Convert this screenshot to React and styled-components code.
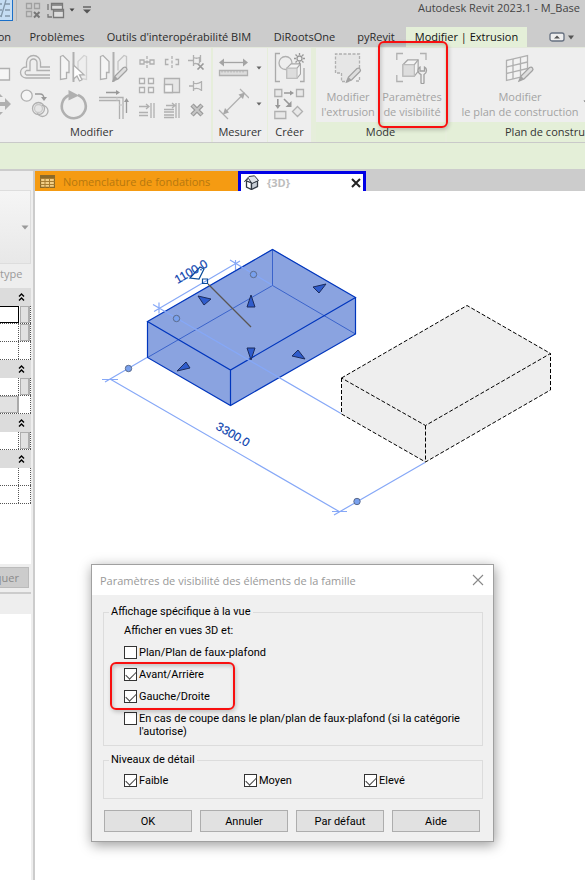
import React, {useState} from 'react';
import styled, {createGlobalStyle} from 'styled-components';

const GlobalStyle = createGlobalStyle`
  * {
    box-sizing: border-box;
  }
  body {
    margin: 0;
    overflow-x: hidden;
    background: #cccccc;
    font-family: "Open Sans", "Noto Sans", sans-serif;
    font-size: 11px;
    color: #333333;
  }
  button, input {
    margin: 0;
    padding: 0;
    font: inherit;
    color: inherit;
  }
  svg {
    flex: none;
  }
`;

const Window = styled.div`
  display: flex;
  flex-direction: column;
  min-height: 100vh;
  overflow: hidden;
`;

/* ---------- title bar ---------- */

const TitleBar = styled.header`
  display: flex;
  height: 27px;
  white-space: nowrap;
`;

const QuickAccess = styled.div`
  display: flex;
  flex: 0 0 418px;
`;

const QuickButton = styled.button`
  display: flex;
  align-items: center;
  justify-content: center;
  width: ${props => props.$width}px;
  height: 20px;
  border: none;
  background: none;
`;

const ActiveQuickButton = styled(QuickButton)`
  height: 21px;
  border: 1px solid #1a6fc9;
  border-width: 0 1px 1px 0;
  background: #c5ddf3;
`;

const Divider = styled.span`
  width: 1px;
  height: 21px;
  margin: 0 6px 0 3px;
  background: #b5b5b5;
`;

const AppTitle = styled.h1`
  margin: 0;
  font-size: 11px;
  font-weight: 400;
  line-height: 16px;
  color: #444444;
`;

/* ---------- ribbon ---------- */

const TabRow = styled.nav`
  display: flex;
  align-items: stretch;
  height: 20px;
  white-space: nowrap;
`;

const RibbonTab = styled.button`
  display: flex;
  flex: none;
  justify-content: ${props => (props.$cut ? 'flex-end' : 'center')};
  width: ${props => props.$width}px;
  padding-right: ${props => (props.$cut ? 8 : 0)}px;
  border: none;
  background: ${props => (props.$active ? '#e4efd8' : 'transparent')};
  color: ${props => (props.$active ? '#111111' : '#2b2b2b')};
  line-height: 20px;
  white-space: nowrap;
`;

const CollapseButton = styled.button`
  display: flex;
  align-items: center;
  margin-left: 22px;
  border: none;
  background: none;
`;

const Ribbon = styled.section`
  display: flex;
  height: 96px;
  border-top: 1px solid #e4e9dc;
  border-bottom: 1px solid #c9c9c9;
  background: #e6eedb;
  overflow: hidden;
`;

const Panel = styled.div`
  display: flex;
  flex-direction: column;
  flex: ${props => (props.$grow ? '1 0 auto' : 'none')};
  width: ${props => (props.$width ? props.$width + 'px' : 'auto')};
  margin-right: ${props => props.$gap || 0}px;
  background: #eeeeee;
  overflow: hidden;
`;

const PanelBody = styled.div`
  display: flex;
  height: 75px;
  padding: 2px 0 0 ${props => props.$indent || 0}px;
`;

const PanelTitle = styled.div`
  height: 20px;
  padding-left: ${props => props.$indent || 0}px;
  background: ${props => (props.$green ? '#e4efd8' : 'transparent')};
  line-height: 19px;
  text-align: ${props => (props.$indent ? 'left' : 'center')};
  white-space: nowrap;
`;

const ToolGrid = styled.div`
  display: grid;
  grid-template-columns: ${props => props.$columns};
  grid-auto-rows: ${props => props.$row}px;
  height: 72px;
`;

const Tool = styled.button`
  display: flex;
  align-items: center;
  justify-content: ${props => (props.$start ? 'flex-start' : 'center')};
  border: none;
  background: none;
  min-width: 0;
`;

const BigTool = styled.button`
  flex: none;
  display: flex;
  flex-direction: column;
  align-items: center;
  width: ${props => props.$width}px;
  padding-top: 2px;
  border: none;
  background: none;
  color: #a3a3a3;
  line-height: 15px;
  white-space: nowrap;
  svg {
    margin-bottom: 5px;
  }
`;

const SplitCaret = styled.button`
  display: flex;
  align-items: center;
  align-self: flex-end;
  height: 40px;
  border: none;
  background: none;
`;

const OptionsBar = styled.div`
  height: 26px;
  background: #e4efd8;
`;

// red marker frame drawn over a control
const Marker = styled.span`
  position: absolute;
  top: ${props => props.$top}px;
  left: ${props => props.$left}px;
  width: ${props => props.$width}px;
  height: ${props => props.$height}px;
  border: 2px solid #f80f0f;
  border-radius: 6px;
  box-shadow: 1px 2px 4px rgba(0, 0, 0, 0.2), inset 1px 2px 4px rgba(0, 0, 0, 0.2);
  pointer-events: none;
`;

const RibbonArea = styled.div`
  position: relative;
`;

/* ---------- property palette ---------- */

const Workspace = styled.main`
  display: flex;
  flex: 1;
  padding-top: 2px;
`;

const Palette = styled.aside`
  display: flex;
  flex-direction: column;
  flex: 0 0 33px;
  margin-right: 2px;
  padding-right: 2px;
  background: #eeeeee;
  overflow: hidden;
`;

const TypeSelector = styled.button`
  display: flex;
  align-items: center;
  justify-content: flex-end;
  height: 74px;
  margin-top: 19px;
  padding-right: 1px;
  border: 1px solid #dddddd;
  border-left: none;
  background: linear-gradient(#f5f5f5, #e8e8e8);
`;

const TypeLabel = styled.div`
  height: 24px;
  line-height: 20px;
  color: #9a9a9a;
`;

const PropertyTable = styled.div`
  height: 276px;
  background: #ffffff;
`;

const GroupHeader = styled.button`
  display: flex;
  align-items: center;
  justify-content: flex-end;
  width: 100%;
  height: 18px;
  padding-right: 6px;
  border: none;
  background: #dcdcdc;
`;

const PropertyRow = styled.div`
  display: flex;
  height: 18px;
  border-bottom: 1px dotted #555555;
`;

const PropertyValue = styled.div`
  width: 19px;
  border: ${props => (props.$kind === 'edit' ? '1px solid #000000' : 'none')};
  border-right: ${props => (props.$kind === 'edit' ? '1px solid #000000' : '1px dotted #555555')};
  border-left: none;
  ${props => props.$kind === 'button' && `
    border: 1px solid #aaaaaa;
    border-left: none;
    border-right-width: 2px;
    background: #e1e1e1;
  `}
`;

const PropertyAssoc = styled.div`
  display: flex;
  flex: 1;
  justify-content: flex-end;
  border-right: 1px dotted #555555;
`;

const AssocButton = styled.button`
  width: 10px;
  height: 17px;
  border: 1px solid #adadad;
  border-right-width: 2px;
  background: #e1e1e1;
`;

const ApplyRow = styled.div`
  padding: 3px 2px 4px 0;
  border-bottom: 2px solid #cccccc;
`;

const ApplyButton = styled.button`
  display: flex;
  align-items: center;
  justify-content: flex-end;
  width: 100%;
  height: 21px;
  padding-right: 9px;
  border: 1px solid #bbbbbb;
  border-left: none;
  background: #cccccc;
  color: #8a8a8a;
`;

const BrowserPane = styled.div`
  flex: 1;
  margin-top: 20px;
  background: #ffffff;
`;

/* ---------- views ---------- */

const ViewArea = styled.div`
  display: flex;
  flex-direction: column;
  flex: 1;
  min-width: 0;
`;

const ViewTabs = styled.div`
  display: flex;
  height: 20px;
`;

const ViewTab = styled.div`
  display: flex;
  align-items: center;
  gap: 8px;
  width: ${props => props.$width}px;
  padding: 1px 4px 0 5px;
  background: #f59b12;
  color: #b5780f;
  white-space: nowrap;
`;

const CurrentViewTab = styled(ViewTab)`
  padding: 0 1px 0 3px;
  border: 3px solid #0000e6;
  border-bottom: none;
  background: #ffffff;
  color: #bdbdbd;
  font-weight: 700;
`;

const CloseView = styled.button`
  display: flex;
  margin-left: auto;
  border: none;
  background: none;
`;

const Canvas = styled.div`
  position: relative;
  flex: 1;
  min-height: 689px;
  background: #ffffff;
`;

const DimensionText = styled.text`
  font-family: "Liberation Sans", Arial, sans-serif;
  font-size: 12px;
  fill: #0a3fae;
  stroke: #0a3fae;
  stroke-width: 0.2px;
  text-anchor: middle;
`;

/* ---------- dialog ---------- */

const Dialog = styled.form`
  position: absolute;
  top: 373px;
  left: 56px;
  width: 403px;
  border: 1px solid #a0a0a0;
  background: #f0f0f0;
  box-shadow: 1px 3px 12px rgba(0, 0, 0, 0.4);
  font-family: Roboto, "Open Sans", sans-serif;
  color: #000000;
`;

const DialogHeader = styled.div`
  display: flex;
  align-items: center;
  justify-content: space-between;
  height: 30px;
  padding: 0 9px 0 8px;
  background: #ffffff;
`;

const DialogTitle = styled.h2`
  margin: 0;
  font-family: "Open Sans", "Noto Sans", sans-serif;
  font-size: 11px;
  font-weight: 400;
  color: #999999;
  white-space: nowrap;
`;

const CloseDialog = styled.button`
  display: flex;
  border: none;
  background: none;
`;

const DialogBody = styled.div`
  display: flex;
  flex-direction: column;
  gap: 7px;
  padding: 10px 10px 9px 11px;
`;

const Group = styled.fieldset`
  position: relative;
  min-width: 0;
  margin: 0;
  padding: ${props => props.$padding};
  border: 1px solid #dcdcdc;
`;

const GroupTitle = styled.legend`
  margin-left: ${props => props.$shift}px;
  padding: 0 2px;
  line-height: 14px;
`;

const Stack = styled.div`
  display: flex;
  flex-direction: column;
  gap: 8px;
  line-height: 14px;
`;

const Levels = styled.div`
  display: grid;
  grid-template-columns: repeat(3, 120px);
`;

const CheckLabel = styled.label`
  display: flex;
  align-items: flex-start;
  gap: 2px;
  line-height: ${props => (props.$multi ? 13 : 14)}px;
`;

const CheckBox = styled.input`
  appearance: none;
  flex: none;
  width: 13px;
  height: 13px;
  border: 1px solid #333333;
  background: #ffffff;
  &:checked::after {
    content: '';
    display: block;
    width: 9px;
    height: 5px;
    margin: 2px 0 0 1px;
    border: solid #444444;
    border-width: 0 0 1px 1px;
    transform: rotate(-45deg);
  }
`;

const ButtonRow = styled.div`
  display: flex;
  gap: 8px;
  padding: 4px 0 0 1px;
`;

const DialogButton = styled.button`
  width: 88px;
  height: 22px;
  border: 1px solid #adadad;
  background: #e1e1e1;
`;

/* ---------- icons ---------- */

const Icon = ({w = 32, h = 32, children}) => (
    <svg width={w} height={h} viewBox={`0 0 ${w} ${h}`} fill="none" stroke="#b0b0b0" strokeWidth="1.3" aria-hidden="true">
      {children}
    </svg>
);

const Caret = ({color = '#666666'}) => (
    <Icon w={6} h={4}><path d="M0.5 0.5h5L3 3.500z" fill={color} stroke="none"/></Icon>
);

const Pencil = ({x, y}) => (
    <g transform={`translate(${x} ${y})`}>
      <path d="M0 14l2-5 8.500-8.500q2-1 3 .5t0 2.500L5 12z" fill="#dedede" stroke="#a2a2a2"/>
      <path d="M0 14l2-5 3 3z" fill="#a2a2a2" stroke="none"/>
    </g>
);

const Cube = ({x, y, s}) => (
    <g transform={`translate(${x} ${y}) scale(${s})`} stroke="#a6a6a6">
      <path d="M1 6l5-5h11v12l-4 5H1z" fill="#f3f3f3"/>
      <path d="M1 6h12v12H1z" fill="#dddddd" stroke="#bcbcbc"/>
      <path d="M13 6l4-5"/>
    </g>
);

const largeTools = [
  ['Aligner', (
      <Icon w={15} h={32}><path d="M-5 16.500H9.500V28H-5" fill="#f6f6f6"/></Icon>
  ), true],
  ['Décaler', (
      <Icon>
        <path d="M31 15H21.500V10.500a7 7 0 0 0-14 0V15H7a5.500 5.500 0 0 0 0 11H31"/>
        <path d="M31 18.500H18V10.500a3.500 3.500 0 0 0-7 0v8H7.500a2.500 2.500 0 0 0 0 4.500H31"/>
      </Icon>
  )],
  ['Symétrie par axe', (
      <Icon>
        <path d="M2.500 4.500l2.500-1 6 6v11H8.500v6l-6 1z" fill="#f5f5f5"/>
        <path d="M28.500 4.500l-2.500-1-6 6v11h2.500v6l6 1z" stroke="#d2d2d2"/>
        <path d="M15.500 0v30" strokeWidth="2"/>
        <path d="M15.500 13v14l3.500-3 2.500 5 2.500-1.200-2.500-5h4.500z" fill="#ffffff"/>
      </Icon>
  )],
  ['Symétrie par dessin', (
      <Icon>
        <path d="M2.500 4.500l2.500-1 6 6v11H8.500v6l-6 1z" fill="#f5f5f5"/>
        <path d="M28.500 16V4.500l-2.500-1-6 6v9" stroke="#c4c4c4"/>
        <path d="M15.500 0v30" strokeWidth="2"/>
        <Pencil x={15} y={15}/>
      </Icon>
  )],
  ['Déplacer', (
      <Icon w={15} h={32}>
        <path d="M0 14h5v-4l6 6-6 6v-4H0zM-3 5h2l4 4H-3M-3 28h2l4-4H-3" fill="#b0b0b0" stroke="none"/>
      </Icon>
  ), true],
  ['Copier', (
      <Icon>
        <circle cx="7.700" cy="7.700" r="5.500" fill="#f5f5f5"/>
        <circle cx="23.500" cy="23" r="5.500"/>
        <circle cx="19.500" cy="20.500" r="6"/>
        <circle cx="19.500" cy="20.500" r="4" fill="#e6e6e6" stroke="#c8c8c8"/>
        <path d="M16 6h5q4 0 4 5" stroke="#999999"/>
        <path d="M22 9h6l-3 4z" fill="#999999" stroke="none"/>
      </Icon>
  )],
  ['Rotation', (
      <Icon>
        <path d="M20 7a12 12 0 1 1-9 0.200" strokeWidth="2.600"/>
        <path d="M10.500 2l10.500 5.500-10.500 5z" fill="#b0b0b0" stroke="none"/>
      </Icon>
  )],
  ['Ajuster', (
      <Icon>
        <path d="M1 9.500h24V31M1 12.500h20.500V31"/>
        <path d="M19 9.500v3M21.500 17h3.500" stroke="#cccccc"/>
        <path d="M8 4.500h12M28.500 25V13" stroke="#999999"/>
        <path d="M18 2l4 2.500-4 2.500zM26 14l2.500-4 2.500 4z" fill="#999999" stroke="none"/>
      </Icon>
  )],
];

const smallTools = [
  ['Scinder', (
      <Icon w={16} h={16}><path d="M1 6h4v4H1zM11 6h4v4h-4zM8 2v3M8 6.500v3M8 11v3M5 8h6"/></Icon>
  )],
  ['Scinder avec espace', (
      <Icon w={16} h={16}><path d="M4.500 5.500H1.500v5h3M11.500 5.500h3v5h-3M8 2v3M8 6.500v3M8 11v3"/></Icon>
  )],
  ['Déverrouiller', (
      <Icon w={18} h={16}>
        <path d="M0 6.500h5M5.500 1v11M5.500 3.500q3 1.500 6 0v6M5.500 10q2-1 4 0M12.500 1v7"/>
        <path d="M9.500 9.500l6 6M15.500 9.500l-6 6" stroke="#999999" strokeWidth="1.600"/>
      </Icon>
  )],
  ['Réseau', (
      <Icon w={18} h={18}><path d="M1.500 1.500h5v5h-5zM10.500 1.500h5v5h-5zM1.500 10.500h5v5h-5zM10.500 10.500h5v5h-5z" fill="#f4f4f4"/></Icon>
  )],
  ['Echelle', (
      <Icon w={18} h={18}>
        <path d="M1.500 1.500h15v14h-15z" fill="#e6e6e6"/>
        <path d="M1.500 7.500h8v8h-8z" fill="#f6f6f6"/>
      </Icon>
  )],
  ['Verrouiller', (
      <Icon w={16} h={16}><path d="M0 8h4.500M4.500 3v10M4.500 5q4 1.500 7.500-1M4.500 11q4-1.500 7.500 1M12.500 3v10"/></Icon>
  )],
  ['Ajuster un élément', (
      <Icon w={18} h={18}><path d="M1 5.500h9M8 3l3 2.500L8 8M1 11.500h9M1 14.500h9M13 2v15M16 2v15"/></Icon>
  )],
  ['Ajuster plusieurs éléments', (
      <Icon w={18} h={18}><path d="M3 4.500h8M9 2l3 2.500L9 7M1 8.500h10M1 11h10M1 14h10M1 16.500h10M13 2v15M16 2v15"/></Icon>
  )],
  ['Supprimer', (
      <Icon w={16} h={16}>
        <path d="M3 3l10 10M13 3L3 13" stroke="#999999" strokeWidth="4.500"/>
        <path d="M3.500 3.500l9 9M12.500 3.500l-9 9" stroke="#c6c6c6" strokeWidth="2"/>
      </Icon>
  )],
];

const RulerIcon = () => (
    <Icon>
      <path d="M4 10.500h24" stroke="#a4a4a4"/>
      <path d="M7 6.500v8l-5-4zM26 6.500v8l5-4z" fill="#a4a4a4" stroke="none"/>
      <path d="M2.500 18.500h28v5h-28z" fill="#dddddd"/>
      <path d="M5 18.500v2M8 18.500v2M11 18.500v2M14 18.500v2M17 18.500v2M20 18.500v2M23 18.500v2M26 18.500v2" strokeWidth="1"/>
    </Icon>
);

const AlignedIcon = () => (
    <Icon>
      <path d="M7 25.500L27 5.500M2 22l9 9M23 1l9 9"/>
      <path d="M6 26.500l2-6.500 4 4.500zM28 4.500l-6.500 2 4.500 4.500z" fill="#a8a8a8" stroke="none"/>
    </Icon>
);

const ComponentIcon = () => (
    <Icon>
      <path d="M6 1.500H1.500v28H6M26 29.500h4V16" stroke="#aaaaaa"/>
      <circle cx="11.500" cy="11" r="6.500"/>
      <Cube x={12} y={11} s={0.85}/>
      <circle cx="25.500" cy="6.500" r="2.500" stroke="#999999"/>
      <path d="M25.500 1v2M25.500 10v2M20 6.500h2M29 6.500h2M21.500 2.500l1.500 1.500M28 9l1.500 1.500M29.500 2.500L28 4M23 9l-1.500 1.500" stroke="#999999"/>
    </Icon>
);

const GroupIcon = () => (
    <Icon>
      <path d="M.8 1.500h7v7h-7zM22.500 1.500h7v7h-7zM.8 23.500h11v7h-11zM23.500 18.500l5 5-5 5-5-5z" fill="#e8e8e8"/>
      <path d="M10 5h7M3.800 11v7M10 11l5 5" stroke="#999999" strokeWidth="1.600"/>
      <path d="M16 2.500l4 2.500-4 2.500zM1 17l2.800 4 2.800-4zM17.500 19v-6l-6 6z" fill="#999999" stroke="none"/>
    </Icon>
);

const EditExtrusionIcon = () => (
    <Icon>
      <path d="M3.500 2h24v17l-9 10h-9v-8h-6z" fill="#e6e6e6" stroke="none"/>
      <path d="M27.500 16V2h-24v19h6v8.500h7M27.500 25v4h-4" strokeDasharray="3 1.500"/>
      <Pencil x={14.500} y={16}/>
    </Icon>
);

const VisibilityIcon = () => (
    <Icon>
      <path d="M.8 8V1.500H7M24 1.500h6V8M7 29.500H.8V23"/>
      <Cube x={6} y={7} s={0.95}/>
      <path d="M25 31V22.500q-3-1.500-3-4t2-3.500v4h4.500v-4q2 1 2 3.500t-2.500 4V31q-1.500 1.500-3 0z" fill="#eeeeee" stroke="#a0a0a0"/>
    </Icon>
);

const EditPlaneIcon = () => (
    <Icon>
      <path d="M2.500 8.500L23.500 3.500v20l-21 5z" fill="#f2f2f2"/>
      <path d="M9 7v20M16.500 5v20M2.500 15l21-5M2.500 21.500l21-5"/>
      <Pencil x={15} y={15}/>
    </Icon>
);

const Chevrons = () => (
    <Icon w={7} h={8}>
      <path d="M1 3.500L3.500 1 6 3.500M1 7.500L3.500 5 6 7.500" stroke="#000000" strokeWidth="1.400"/>
    </Icon>
);

/* ---------- model drawing ---------- */

const arrows = [
  '198,296 211,299 204,305',
  '251,295 247,307 255,307',
  '326,284 313,287 319,293',
  '247,348 255,348 251,360',
  '305,359 298,350 292,356',
  '177,371 186,362 190,368',
];

const grips = [[128.5, 368.5], [357, 501.500], [176.500, 318.500], [253.500, 274.500]];

const Model = () => (
    <svg width="550" height="373" viewBox="35 191 550 373" fill="none" role="img" aria-label="Vue 3D">
      {/* reference box */}
      <path d="M467 305.500L550.500 353.500V390L425.500 462 341.500 414V378z" fill="#eeeeee"/>
      <path
          d="M341.500 378L467 305.500 550.500 353.500 425.500 425.500zM341.500 378V414L425.500 462 550.500 390V353.500M425.500 425.500V462"
          stroke="#000000"
          strokeDasharray="4 2"
      />

      {/* selected extrusion */}
      <path d="M272.500 249L355.500 297.500V334L230.500 405.500 147.500 357.500V321.500z" fill="#8aa3e0"/>
      <path d="M147.500 357.500L272.500 285.500 355.500 334M272.500 249.500v36" stroke="#3a63cb"/>
      <path
          d="M147.500 321.500L272.500 249.500 355.500 297.500 230.500 370zM147.500 321.500V357.500L230.500 405.500 355.500 334V297.500M230.500 370V405.500"
          stroke="#0036bd"
          strokeWidth="1.200"
      />

      {/* dimensions */}
      <g stroke="#86a8f7" strokeWidth="1.200">
        <path d="M154 311.500L240 261M153 304.500L341 413.500M159 302.500v11M230 260l42 25M235.500 260v10"/>
        <path d="M105 382L147 357.500M110 379L340 512M102 379.500h16M334 515L425 462.500M332 511.500h15"/>
      </g>
      {grips.map(([x, y]) => (
          <circle key={x} cx={x} cy={y} r="3.200" fill="#79a1ee" stroke="#5c6b8c"/>
      ))}
      {arrows.map(points => (
          <polygon key={points} points={points} fill="#2f5ccc" stroke="#1c2c5e"/>
      ))}
      <path d="M208 284L251 327" stroke="#5a5652" strokeWidth="1.300"/>
      <path d="M190 278l10-11 4 2-5 10zM202.500 279h5v4.500h-5z" stroke="#0a4c9a" strokeWidth="1.200"/>
      <DimensionText transform="translate(193 275) rotate(-30)">1100.0</DimensionText>
      <DimensionText transform="translate(231 438) rotate(30)">3300.0</DimensionText>
    </svg>
);

/* ---------- content ---------- */

const ribbonTabs = [
  {name: 'on', width: 19, cut: true},
  {name: 'Problèmes', width: 76},
  {name: "Outils d'interopérabilité BIM", width: 168},
  {name: 'DiRootsOne', width: 83},
  {name: 'pyRevit', width: 60},
  {name: 'Modifier | Extrusion', width: 121, active: true},
];

const propertyRows = [
  'group', {kind: 'edit', assoc: true}, {assoc: true}, {},
  'group', {assoc: true}, {kind: 'button'},
  'group', {assoc: true},
  'group', {}, {},
];

const Check = ({name, value, onToggle, multi}) => (
    <CheckLabel $multi={multi}>
      <CheckBox type="checkbox" checked={value} onChange={() => onToggle(name)}/>
      <span>{name}</span>
    </CheckLabel>
);

const PLAN = 'Plan/Plan de faux-plafond';
const CUT = "En cas de coupe dans le plan/plan de faux-plafond (si la catégorie l'autorise)";

const VisibilityDialog = () => {
  const [checked, setChecked] = useState({
    [PLAN]: false,
    'Avant/Arrière': true,
    'Gauche/Droite': true,
    [CUT]: false,
    Faible: true,
    Moyen: true,
    Elevé: true,
  });

  const toggle = name => setChecked({...checked, [name]: !checked[name]});

  const renderCheck = name => (
      <Check key={name} name={name} value={checked[name]} onToggle={toggle} multi={name === CUT}/>
  );

  return (
      <Dialog onSubmit={e => e.preventDefault()}>
        <DialogHeader>
          <DialogTitle>Paramètres de visibilité des éléments de la famille</DialogTitle>
          <CloseDialog type="button" aria-label="Fermer">
            <Icon w={12} h={12}><path d="M1 1l10 10M11 1L1 11" stroke="#888888" strokeWidth="1.100"/></Icon>
          </CloseDialog>
        </DialogHeader>
        <DialogBody>
          <Group $padding="5px 20px 7px 20px">
            <GroupTitle $shift={-15}>Affichage spécifique à la vue</GroupTitle>
            <Stack>
              <span>Afficher en vues 3D et:</span>
              {[PLAN, 'Avant/Arrière', 'Gauche/Droite', CUT].map(renderCheck)}
            </Stack>
            <Marker $top={43} $left={6} $width={125} $height={48}/>
          </Group>
          <Group $padding="7px 0 10px 20px">
            <GroupTitle $shift={-15}>Niveaux de détail</GroupTitle>
            <Levels>
              {['Faible', 'Moyen', 'Elevé'].map(renderCheck)}
            </Levels>
          </Group>
          <ButtonRow>
            {['OK', 'Annuler', 'Par défaut', 'Aide'].map(name => (
                <DialogButton key={name} type="button">{name}</DialogButton>
            ))}
          </ButtonRow>
        </DialogBody>
      </Dialog>
  );
}

const PropertyPalette = () => (
    <Palette>
      <TypeSelector aria-label="Type">
        <Icon w={8} h={5}><path d="M0.5 0.5h7L4 4.500z" fill="#999999" stroke="none"/></Icon>
      </TypeSelector>
      <TypeLabel>type</TypeLabel>
      <PropertyTable>
        {propertyRows.map((row, i) => row === 'group' ? (
            <GroupHeader key={i} aria-label="Réduire"><Chevrons/></GroupHeader>
        ) : (
            <PropertyRow key={i}>
              <PropertyValue $kind={row.kind}/>
              <PropertyAssoc>{row.assoc && <AssocButton aria-label="Associer"/>}</PropertyAssoc>
            </PropertyRow>
        ))}
      </PropertyTable>
      <ApplyRow><ApplyButton>quer</ApplyButton></ApplyRow>
      <BrowserPane/>
    </Palette>
);

const App = () => (
    <Window>
      <GlobalStyle/>
      <TitleBar>
        <QuickAccess>
          <ActiveQuickButton $width={13} aria-label="Lignes fines">
            <Icon w={12} h={20}><path d="M0 4h2M5 4h5M0 10h2M5 10h5M0 16h2M5 16h5M6 0L1 17" stroke="#8297a9"/></Icon>
          </ActiveQuickButton>
          <Divider/>
          <QuickButton $width={20} aria-label="Fermer les vues">
            <Icon w={16} h={18}>
              <path d="M1.500 2.500h5v5h-5zM9.500 2.500h5v5h-5zM1.500 10.500h5v5h-5z" stroke="#a0a0a0"/>
              <path d="M9 11l5.500 5.500M14.500 11L9 16.500" stroke="#777777" strokeWidth="2"/>
            </Icon>
          </QuickButton>
          <QuickButton $width={26} aria-label="Changer de fenêtre">
            <Icon w={18} h={18}>
              <path d="M4.500 2.500h11v6h-11zM6.500 8.500h10v8h-10z" fill="#dddddd" stroke="#777777"/>
              <path d="M4.500 4h11M6.500 10h10M1 3v6M1 13v3h4" stroke="#777777"/>
            </Icon>
          </QuickButton>
          <QuickButton $width={6} aria-label="Liste des fenêtres"><Caret color="#444444"/></QuickButton>
          <QuickButton $width={24} aria-label="Personnaliser">
            <Icon w={10} h={8}><path d="M1 1h8" stroke="#555555"/><path d="M1 3.500h8L5 7.500z" fill="#555555" stroke="none"/></Icon>
          </QuickButton>
        </QuickAccess>
        <AppTitle>Autodesk Revit 2023.1 - M_Base</AppTitle>
      </TitleBar>

      <RibbonArea>
        <TabRow>
          {ribbonTabs.map(tab => (
              <RibbonTab key={tab.name} $width={tab.width} $active={tab.active} $cut={tab.cut}>{tab.name}</RibbonTab>
          ))}
          <CollapseButton aria-label="Réduire le ruban">
            <Icon w={26} h={10}>
              <rect x="1" y="1" width="14" height="8" rx="2" fill="#eeeeee" stroke="#667080"/>
              <path d="M5 6.500h6L8 3.500zM19 3.500h6l-3 4z" fill="#555555" stroke="none"/>
            </Icon>
          </CollapseButton>
        </TabRow>
        <Ribbon>
          <Panel $width={211} $gap={2}>
            <PanelBody>
              <ToolGrid $columns="15px 39px 39px 41px" $row={36}>
                {largeTools.map(([name, icon, start]) => (
                    <Tool key={name} $start={start} aria-label={name}>{icon}</Tool>
                ))}
              </ToolGrid>
              <ToolGrid $columns="25px 25px 25px" $row={24}>
                {smallTools.map(([name, icon]) => <Tool key={name} aria-label={name}>{icon}</Tool>)}
              </ToolGrid>
            </PanelBody>
            <PanelTitle $indent={70}>Modifier</PanelTitle>
          </Panel>
          <Panel $width={54} $gap={1}>
            <PanelBody>
              <ToolGrid $columns="40px 12px" $row={36}>
                <Tool aria-label="Mesurer"><RulerIcon/></Tool>
                <Tool aria-label="Options de mesure"><Caret/></Tool>
                <Tool aria-label="Cote alignée"><AlignedIcon/></Tool>
                <Tool aria-label="Options de cote"><Caret/></Tool>
              </ToolGrid>
            </PanelBody>
            <PanelTitle>Mesurer</PanelTitle>
          </Panel>
          <Panel $width={43} $gap={5}>
            <PanelBody>
              <ToolGrid $columns="44px" $row={36}>
                <Tool aria-label="Créer un composant"><ComponentIcon/></Tool>
                <Tool aria-label="Créer un groupe"><GroupIcon/></Tool>
              </ToolGrid>
            </PanelBody>
            <PanelTitle>Créer</PanelTitle>
          </Panel>
          <Panel $width={129} $gap={2}>
            <PanelBody>
              <BigTool $width={64}>
                <EditExtrusionIcon/>
                <span>Modifier</span>
                <span>l'extrusion</span>
              </BigTool>
              <BigTool $width={64}>
                <VisibilityIcon/>
                <span>Paramètres</span>
                <span>de visibilité</span>
              </BigTool>
            </PanelBody>
            <PanelTitle $green>Mode</PanelTitle>
          </Panel>
          <Panel $grow>
            <PanelBody $indent={10}>
              <BigTool $width={126}>
                <EditPlaneIcon/>
                <span>Modifier</span>
                <span>le plan de construction</span>
              </BigTool>
              <SplitCaret aria-label="Options du plan"><Caret/></SplitCaret>
            </PanelBody>
            <PanelTitle $green $indent={58}>Plan de construction</PanelTitle>
          </Panel>
        </Ribbon>
        <Marker $top={14} $left={378} $width={70} $height={87}/>
      </RibbonArea>
      <OptionsBar/>

      <Workspace>
        <PropertyPalette/>
        <ViewArea>
          <ViewTabs>
            <ViewTab $width={203}>
              <Icon w={15} h={13}>
                <path d="M.5.5h14v12H.500z" fill="#f3cf86" stroke="#8a6a2a"/>
                <path d="M.5 3.500h14M.5 6.500h14M.5 9.500h14M5 3v10M9.500 3v10" stroke="#a77d33" strokeWidth="1"/>
                <path d="M.5 2h14" stroke="#8a6a2a" strokeWidth="2"/>
              </Icon>
              <span>Nomenclature de fondations</span>
            </ViewTab>
            <CurrentViewTab $width={128}>
              <Icon w={15} h={15}>
                <path d="M2.500 6v6l5 2.500V8z" fill="#ffffff" stroke="#333a44"/>
                <path d="M7.500 14.500V8l6-2v5.500z" fill="#c8ced6" stroke="#333a44"/>
                <path d="M.5 6.500l4.500-5L10.500.8l4 4.700-6.500 3-3.500-5z" fill="#dfe3e8" stroke="#333a44" strokeWidth="1"/>
              </Icon>
              <span>{'{3D}'}</span>
              <CloseView aria-label="Fermer la vue">
                <Icon w={12} h={12}><path d="M2 2l8 8M10 2l-8 8" stroke="#222222" strokeWidth="2"/></Icon>
              </CloseView>
            </CurrentViewTab>
          </ViewTabs>
          <Canvas>
            <Model/>
            <VisibilityDialog/>
          </Canvas>
        </ViewArea>
      </Workspace>
    </Window>
);

export default App;
